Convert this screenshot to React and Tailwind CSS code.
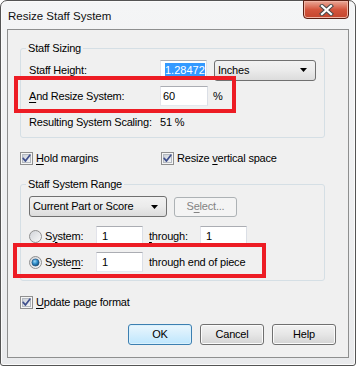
import React from 'react'

const FONT = "font-['Liberation_Sans',Arial,sans-serif]"

function U({ children }) {
  return <span className="underline underline-offset-[2px] decoration-[1px]">{children}</span>
}

function CheckBox({ id }) {
  return (
    <svg width="13" height="13" viewBox="0 0 13 13" className="shrink-0">
      <defs>
        <linearGradient id={id} x1="0" y1="0" x2="1" y2="1">
          <stop offset="0" stopColor="#c9ced6" />
          <stop offset="1" stopColor="#f6f7f8" />
        </linearGradient>
      </defs>
      <rect x="0.5" y="0.5" width="12" height="12" fill="#f5f5f5" stroke="#8f8f8f" />
      <rect x="2.5" y="2.5" width="8" height="8" fill={`url(#${id})`} stroke="#b4b9c0" />
      <path d="M3.2 6.4 L5.4 9 L9.8 3.2" stroke="#3f4f8c" strokeWidth="1.7" fill="none" strokeLinecap="round" strokeLinejoin="round" />
    </svg>
  )
}

function Radio({ checked, id }) {
  return (
    <svg width="13" height="13" viewBox="0 0 13 13" className="shrink-0">
      <defs>
        <linearGradient id={id + 'a'} x1="0" y1="0" x2="1" y2="1">
          <stop offset="0" stopColor="#d0d3d8" />
          <stop offset="1" stopColor="#fafafa" />
        </linearGradient>
        <radialGradient id={id + 'b'} cx="0.4" cy="0.35" r="0.7">
          <stop offset="0" stopColor="#9ad7f8" />
          <stop offset="0.5" stopColor="#2f8cc8" />
          <stop offset="1" stopColor="#10456e" />
        </radialGradient>
      </defs>
      <circle cx="6.5" cy="6.5" r="6" fill={`url(#${id}a)`} stroke="#8f8f8f" />
      {checked && <circle cx="6.5" cy="6.5" r="3.6" fill={`url(#${id}b)`} stroke="#1c4a73" strokeWidth="0.6" />}
    </svg>
  )
}

function Arrow() {
  return (
    <svg width="7" height="4" viewBox="0 0 7 4" className="shrink-0">
      <path d="M0 0 L7 0 L3.5 4 Z" fill="#000" />
    </svg>
  )
}

function TextBox({ w, children }) {
  return (
    <div className={`${w} h-[20px] bg-white border border-[#abadb3] border-l-[#e2e3ea] border-r-[#dbdfe6] border-b-[#e3e9ef] flex items-center pl-[2px] overflow-hidden shrink-0`}>
      {children}
    </div>
  )
}

function Combo({ w, children }) {
  return (
    <div className={`${w} h-[21px] rounded-[3px] border border-[#707070] bg-gradient-to-b from-[#f2f2f2] via-[#ebebeb] to-[#dcdcdc] flex items-center justify-between pl-[3px] pr-[8px] shrink-0`}>
      <span>{children}</span>
      <Arrow />
    </div>
  )
}

function Button({ children, primary }) {
  return (
    <div
      className={`h-[21px] w-[64px] rounded-[3px] border flex items-center justify-center ${
        primary
          ? 'border-[#3c7fb1] bg-gradient-to-b from-[#eaf6fd] to-[#bee6fd] shadow-[inset_0_0_0_1px_#d9f0fc]'
          : 'border-[#707070] bg-gradient-to-b from-[#f2f2f2] via-[#e6e6e6] to-[#d4d4d4] shadow-[inset_0_0_0_1px_#fbfbfb]'
      }`}
    >
      {children}
    </div>
  )
}

function RedBox({ className }) {
  return <div className={`absolute border-[4px] border-[#ed1c24] pointer-events-none ${className}`} />
}

export default function App() {
  return (
    <div className={`w-[358px] h-[367px] bg-white text-[11px] text-black ${FONT}`}>
      <div className="w-[356px] h-[366px] border border-[#545454] rounded-t-[7px] rounded-b-[3px] bg-gradient-to-b from-[#f4f5f6] to-[#e9eaec] shadow-[inset_0_0_0_1px_#fbfbfb] px-[6px] pb-[7px] flex flex-col">
        {/* title bar */}
        <div className="h-[28px] flex items-start justify-between">
          <div className="pl-[1px] pt-[8px] leading-[14px] text-[11.5px] text-[#111]">Resize Staff System</div>
          <div className="w-[46px] h-[19px] -mt-px rounded-b-[4px] border border-[#5b2014] bg-gradient-to-b from-[#e9a898] via-[#d4553d] to-[#c4452c] shadow-[inset_0_0_0_1px_#f0b4a4] flex items-center justify-center">
            <svg width="15" height="12" viewBox="0 0 15 12">
              <path d="M3 2 L12 10 M12 2 L3 10" stroke="#4a4a4a" strokeWidth="4.2" strokeLinecap="square" />
              <path d="M3 2 L12 10 M12 2 L3 10" stroke="#ffffff" strokeWidth="2.2" strokeLinecap="square" />
            </svg>
          </div>
        </div>

        {/* client area */}
        <div className="flex-1 border border-[#8e8f8f] bg-[#f0f0f0] flex flex-col pl-[12px] tracking-[-0.2px]">
          <fieldset className="mt-[11px] w-[305px] border border-[#d5dfe5] rounded-[3px] pl-[8px] pr-[8px] pb-[4px]">
            <legend className="ml-[-3px] px-[2px] leading-[14px]">Staff Sizing</legend>
            <div className="mt-[4px] h-[22px] flex items-center">
              <div className="w-[131px]"><U>S</U>taff Height:</div>
              <TextBox w="w-[47px]">
                <span className="ml-[2px] bg-[#3399ff] text-white leading-[15px] whitespace-nowrap tracking-normal">1.28472</span>
              </TextBox>
              <div className="ml-[7px]"><Combo w="w-[102px]">Inches</Combo></div>
            </div>
            <div className="relative mt-[4px] h-[22px] flex items-center">
              <div className="w-[131px]"><U>A</U>nd Resize System:</div>
              <TextBox w="w-[48px]">60</TextBox>
              <div className="ml-[5px]">%</div>
              <RedBox className="left-[-15px] top-[-9px] w-[222px] h-[37px]" />
            </div>
            <div className="mt-[4px] h-[22px] flex items-center">
              <div className="w-[131px] whitespace-nowrap">Resulting System Scaling:</div>
              <div>51 %</div>
            </div>
          </fieldset>

          <div className="mt-[12px] h-[16px] flex items-center">
            <div className="w-[141px] flex items-center gap-[3px]">
              <CheckBox id="cb1" />
              <span><U>H</U>old margins</span>
            </div>
            <div className="flex items-center gap-[3px]">
              <CheckBox id="cb2" />
              <span>Resize <U>v</U>ertical space</span>
            </div>
          </div>

          <fieldset className="mt-[11px] w-[305px] border border-[#d5dfe5] rounded-[3px] pl-[8px] pr-[8px] pb-[8px]">
            <legend className="ml-[-3px] px-[2px] leading-[14px]">Staff System Range</legend>
            <div className="mt-[5px] h-[21px] flex items-center">
              <Combo w="w-[138px]">Current Part or Score</Combo>
              <div className="ml-[7px] w-[63px] h-[20px] rounded-[3px] border border-[#adb2b5] bg-[#f4f4f4] flex items-center justify-center text-[#838383]">
                <span>S<U>e</U>lect...</span>
              </div>
            </div>
            <div className="mt-[9px] h-[20px] flex items-center">
              <div className="w-[67px] flex items-center gap-[3px]">
                <Radio id="r1" />
                <span>S<U>y</U>stem:</span>
              </div>
              <TextBox w="w-[47px]"><span className="pl-[3px]">1</span></TextBox>
              <div className="ml-[6px] w-[51px]"><U>t</U>hrough:</div>
              <TextBox w="w-[47px]"><span className="pl-[3px]">1</span></TextBox>
            </div>
            <div className="relative mt-[6px] h-[20px] flex items-center">
              <div className="w-[67px] flex items-center gap-[3px]">
                <Radio id="r2" checked />
                <span>Syste<U>m</U>:</span>
              </div>
              <TextBox w="w-[47px]"><span className="pl-[3px]">1</span></TextBox>
              <div className="ml-[6px]">through end of piece</div>
              <RedBox className="left-[-16px] top-[-9px] w-[253px] h-[35px]" />
            </div>
          </fieldset>

          <div className="mt-[13px] h-[16px] flex items-center gap-[3px]">
            <CheckBox id="cb3" />
            <span><U>U</U>pdate page format</span>
          </div>

          <div className="mt-[14px] mr-[12px] flex justify-end gap-[8px]">
            <Button primary>OK</Button>
            <Button>Cancel</Button>
            <Button>Help</Button>
          </div>
        </div>
      </div>
    </div>
  )
}
